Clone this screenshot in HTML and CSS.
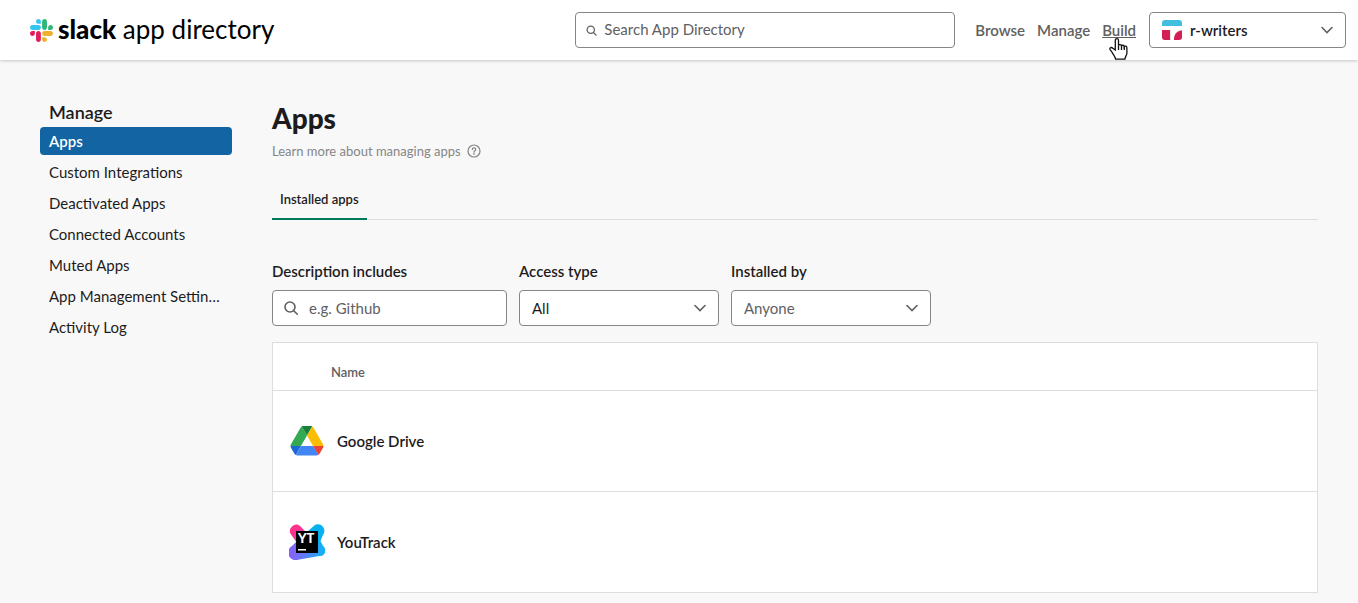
FILE: index.html
```html
<!DOCTYPE html>
<html lang="en">
<head>
<meta charset="utf-8">
<title>Manage apps | Slack App Directory</title>
<link rel="stylesheet" href="styles.css">
</head>
<body>
<header class="topbar">
  <a class="brand" href="#">
    <svg class="brand-mark" viewBox="0 0 122.8 122.8" aria-hidden="true">
      <path fill="#e01e5a" d="M25.8 77.6c0 7.1-5.8 12.9-12.9 12.9S0 84.7 0 77.6s5.8-12.9 12.9-12.9h12.9v12.9zM32.3 77.6c0-7.1 5.8-12.9 12.9-12.9s12.9 5.8 12.9 12.9v32.3c0 7.1-5.8 12.9-12.9 12.9s-12.9-5.8-12.9-12.9V77.6z"/>
      <path fill="#36c5f0" d="M45.2 25.8c-7.1 0-12.9-5.8-12.9-12.9S38.1 0 45.2 0s12.9 5.8 12.9 12.9v12.9H45.2zM45.2 32.3c7.1 0 12.9 5.8 12.9 12.9s-5.8 12.9-12.9 12.9H12.9C5.8 58.1 0 52.3 0 45.2s5.8-12.9 12.9-12.9h32.3z"/>
      <path fill="#2eb67d" d="M97 45.2c0-7.1 5.8-12.9 12.9-12.9s12.9 5.8 12.9 12.9-5.8 12.9-12.9 12.9H97V45.2zM90.5 45.2c0 7.1-5.8 12.9-12.9 12.9s-12.9-5.8-12.9-12.9V12.9C64.7 5.8 70.5 0 77.6 0s12.9 5.8 12.9 12.9v32.3z"/>
      <path fill="#ecb22e" d="M77.6 97c7.1 0 12.9 5.8 12.9 12.9s-5.8 12.9-12.9 12.9-12.9-5.8-12.9-12.9V97h12.9zM77.6 90.5c-7.1 0-12.9-5.8-12.9-12.9s5.8-12.9 12.9-12.9h32.3c7.1 0 12.9 5.8 12.9 12.9s-5.8 12.9-12.9 12.9H77.6z"/>
    </svg>
    <span class="brand-name"><strong>slack</strong> app directory</span>
  </a>
  <div class="topbar-tools">
    <form class="field site-search" role="search">
      <svg class="field-icon" viewBox="0 0 12 12" aria-hidden="true"><circle cx="5.2" cy="5.2" r="4"/><path d="M8.2 8.2 11 11"/></svg>
      <input class="field-input" type="search" aria-label="Search App Directory" placeholder="Search App Directory">
    </form>
    <nav class="topnav" aria-label="Site">
      <a href="#">Browse</a>
      <a href="#">Manage</a>
      <a class="is-hovered" href="#">Build
        <svg class="pointer" viewBox="0 0 19 24" aria-hidden="true"><path d="M6.3 13V3.2c0-2.2 3.2-2.2 3.2 0v5.4c.4-1.4 2.9-1.3 3 .4.5-1.2 2.7-1 2.8.7.6-1 2.6-.8 2.6 1.2v5c0 2.2-1.8 3.6-2 6.2H6.6c-.1-2.4-2.5-4.4-3.6-6.8-.6-1.2-1.6-2-2-2.9-.7-1.7 1.6-2.5 2.8-1.2z"/><path d="M9.5 8.6V13M12.5 9v4M15.3 9.8V13"/></svg>
      </a>
    </nav>
    <button class="team" type="button">
      <svg class="team-icon" viewBox="0 0 20 20" aria-hidden="true">
        <path fill="#e9e6e6" d="M0 5h20v12a3 3 0 0 1-3 3H3a3 3 0 0 1-3-3z"/>
        <path fill="#42bfe0" d="M0 6V3a3 3 0 0 1 3-3h14a3 3 0 0 1 3 3v3z"/>
        <path fill="#fff" d="M0 6h20v4c-6 .5-8 4-8 10H9V10H0z"/>
        <path fill="#d41e56" d="M0 10h8v10H3a3 3 0 0 1-3-3zM20 10.500v6.500a3 3 0 0 1-3 3h-5c0-5 2-9 8-9.500z"/>
      </svg>
      <span class="team-name">r-writers</span>
      <svg class="chevron" viewBox="0 0 12 8" aria-hidden="true"><path d="m1 1.500 5 5 5-5"/></svg>
    </button>
  </div>
</header>

<div class="layout">
  <nav class="sidebar" aria-labelledby="sidebar-title">
    <h2 class="sidebar-title" id="sidebar-title">Manage</h2>
    <ul class="sidebar-list">
      <li><a class="is-current" href="#" aria-current="page">Apps</a></li>
      <li><a href="#">Custom Integrations</a></li>
      <li><a href="#">Deactivated Apps</a></li>
      <li><a href="#">Connected Accounts</a></li>
      <li><a href="#">Muted Apps</a></li>
      <li><a href="#">App Management Settings</a></li>
      <li><a href="#">Activity Log</a></li>
    </ul>
  </nav>

  <main class="content">
    <h1 class="title">Apps</h1>
    <a class="help" href="#">Learn more about managing apps
      <svg class="help-icon" viewBox="0 0 14 14" aria-hidden="true"><circle cx="7" cy="7" r="6"/><path d="M5.300 5.600c0-2.200 3.400-2.200 3.400-.1 0 1.200-1.700 1.200-1.700 2.400M7 9.200v1.300"/></svg>
    </a>
    <div class="tabs" role="tablist">
      <button class="tab" type="button" role="tab" aria-selected="true">Installed apps</button>
    </div>

    <form class="filters">
      <div class="filter filter-wide">
        <label for="description">Description includes</label>
        <div class="field">
          <svg class="field-icon" viewBox="0 0 14 14" aria-hidden="true"><circle cx="6" cy="6" r="5"/><path d="m9.700 9.700 3.600 3.600"/></svg>
          <input class="field-input" id="description" type="text" placeholder="e.g. Github">
        </div>
      </div>
      <div class="filter">
        <label for="access">Access type</label>
        <div class="field">
          <select class="field-select" id="access"><option>All</option></select>
          <svg class="chevron" viewBox="0 0 12 8" aria-hidden="true"><path d="m1 1.500 5 5 5-5"/></svg>
        </div>
      </div>
      <div class="filter">
        <label for="installer">Installed by</label>
        <div class="field">
          <select class="field-select is-muted" id="installer"><option>Anyone</option></select>
          <svg class="chevron" viewBox="0 0 12 8" aria-hidden="true"><path d="m1 1.500 5 5 5-5"/></svg>
        </div>
      </div>
    </form>

    <table class="apps">
      <thead><tr><th scope="col">Name</th></tr></thead>
      <tbody>
        <tr><td><a class="app" href="#">
          <svg class="app-icon" viewBox="-4 -8 95.300 95.300" aria-hidden="true">
            <path fill="#1a67d6" d="m6.600 66.850 3.850 6.650c.8 1.400 1.950 2.500 3.300 3.300l13.750-23.800H0c0 1.550.4 3.100 1.200 4.500z"/>
            <path fill="#34a853" d="M43.650 25 29.900 1.200c-1.350.8-2.500 1.900-3.300 3.300l-25.400 44A9.060 9.060 0 0 0 0 53h27.500z"/>
            <path fill="#ea4335" d="M73.550 76.800c1.350-.8 2.500-1.900 3.300-3.300l1.600-2.750 7.650-13.250c.8-1.400 1.200-2.950 1.200-4.500H59.800l5.850 11.500z"/>
            <path fill="#188038" d="M43.650 25 57.400 1.200C56.050.4 54.500 0 52.900 0H34.400c-1.600 0-3.150.45-4.500 1.200z"/>
            <path fill="#4285f4" d="M59.800 53H27.500L13.750 76.800c1.350.8 2.900 1.200 4.500 1.200h50.800c1.600 0 3.150-.45 4.500-1.200z"/>
            <path fill="#fbbc04" d="m73.400 26.500-12.700-22c-.8-1.400-1.950-2.500-3.300-3.300L43.650 25 59.800 53h27.450c0-1.550-.4-3.100-1.200-4.500z"/>
          </svg>
          <span>Google Drive</span>
        </a></td></tr>
        <tr><td><a class="app" href="#">
          <svg class="app-icon" viewBox="0 0 36 36" aria-hidden="true">
            <defs>
              <linearGradient id="violet" x1="0" y1="0" x2="1" y2="0"><stop offset="0" stop-color="#905cfb"/><stop offset=".5" stop-color="#5681f7"/><stop offset="1" stop-color="#07b8f5"/></linearGradient>
              <linearGradient id="pink" x1="0" y1="0" x2="1" y2="1"><stop offset=".3" stop-color="#ff318c"/><stop offset="1" stop-color="#905cfb"/></linearGradient>
            </defs>
            <path fill="#07b1f0" d="M18 8 25 1.700a6.400 6.400 0 0 1 9 9L31.500 17l4 8a5 5 0 0 1-4 7L18 27z"/>
            <path fill="url(#violet)" d="M3 22 16 9l15 12a5.500 5.500 0 0 1 2 10.500L9 35.700A7.500 7.500 0 0 1 3 22z"/>
            <path fill="url(#pink)" d="M2 10.500A6.300 6.300 0 0 1 11 2l9 9-9 12z"/>
            <path d="M7 7h22v22H7z"/>
            <text class="glyph" x="9" y="19">YT</text>
            <path fill="#fff" d="M9 25h8v1.500H9z"/>
          </svg>
          <span>YouTrack</span>
        </a></td></tr>
      </tbody>
    </table>
  </main>
</div>
</body>
</html>
```
FILE: styles.css
```css
*, *::before, *::after { box-sizing: border-box; }

body {
  margin: 0;
  background: #f8f8f8;
  color: #1d1c1d;
  font: 15px/20px Lato, "Liberation Sans", sans-serif;
}

a { color: inherit; text-decoration: none; }
svg { display: block; flex: none; }

/* Header */
.topbar {
  display: flex;
  align-items: center;
  justify-content: space-between;
  height: 60px;
  padding: 0 12px 0 30px;
  background: #fff;
  box-shadow: 0 1px 3px rgba(0, 0, 0, .2);
}

.brand { display: flex; align-items: center; gap: 5px; color: #000; }
.brand-mark { width: 23px; height: 23px; }
.brand-name { padding-bottom: 2px; font-size: 26px; line-height: 32px; white-space: nowrap; }
.brand-name strong { font-weight: 900; }

.topbar-tools { display: flex; align-items: center; }
.site-search { width: 380px; margin-right: 20px; }

.field { position: relative; display: flex; align-items: center; }
.field-icon, .chevron, .help-icon {
  fill: none;
  stroke: #616061;
  stroke-width: 1.6;
  stroke-linecap: round;
}
.field-icon { position: absolute; left: 12px; width: 14px; height: 14px; }
.site-search .field-icon { left: 11px; width: 11px; height: 11px; stroke-width: 1.4; }
.field-input, .field-select {
  width: 100%;
  height: 36px;
  border: 1px solid #868686;
  border-radius: 4px;
  background: #fff;
  color: #1d1c1d;
  font: inherit;
  appearance: none;
}
.field-input { padding: 0 12px 0 36px; }
.site-search .field-input { padding: 0 12px 2px 28px; }
.field-input::placeholder { color: #616061; opacity: 1; }
.field-select { padding: 0 32px 0 12px; }
.field-select.is-muted { color: #616061; }
.chevron { width: 12px; height: 8px; }
.field .chevron { position: absolute; right: 13px; pointer-events: none; }

.topnav { display: flex; gap: 12px; margin-right: 13px; color: #616061; font-weight: 600; }
.topnav .is-hovered { position: relative; text-decoration: underline; }
.pointer {
  position: absolute;
  top: 17px;
  left: 7px;
  width: 19px;
  height: 24px;
  fill: #fff;
  stroke: #111;
  stroke-width: 1.3;
}

.team {
  display: flex;
  align-items: center;
  gap: 8px;
  width: 197px;
  height: 36px;
  padding: 0 12px;
  border: 1px solid #868686;
  border-radius: 4px;
  background: #fff;
  color: #1d1c1d;
  font: inherit;
  font-weight: 600;
}
.team-icon { width: 20px; height: 20px; }
.team-name { flex: 1; text-align: left; }

/* Page */
.layout { display: flex; gap: 40px; padding: 40px 40px 10px; }
.sidebar { flex: none; width: 192px; }
.sidebar-title { margin: 0; padding: 0 9px 3px; font-size: 18px; line-height: 24px; font-weight: 600; }
.sidebar-list { display: grid; gap: 3px; margin: 0; padding: 0; list-style: none; }
.sidebar-list a {
  display: block;
  padding: 4px 12px 4px 9px;
  overflow: hidden;
  border-radius: 4px;
  text-overflow: ellipsis;
  white-space: nowrap;
}
.sidebar-list li { min-width: 0; }
.sidebar-list .is-current { background: #1264a3; color: #fff; font-weight: 600; }

.content { flex: 1; min-width: 0; }
.title { margin: 0 0 5px; font-size: 28px; line-height: 36px; font-weight: 900; }
.help { display: flex; align-items: center; gap: 6px; color: #868686; font-size: 13px; line-height: 20px; }
.help-icon { width: 14px; height: 14px; stroke: #868686; stroke-width: 1.2; }

.tabs { display: flex; margin-top: 20px; border-bottom: 1px solid #ddd; }
.tab {
  height: 39px;
  margin-bottom: -1px;
  padding: 0 8px 2px;
  border: 0;
  border-bottom: 2px solid #007a5a;
  background: none;
  color: #1d1c1d;
  font: 600 13px/20px Lato, "Liberation Sans", sans-serif;
}

.filters { display: flex; gap: 12px; margin: 41px 0 16px; }
.filter { width: 200px; }
.filter-wide { width: 235px; }
.filter label { display: block; margin-bottom: 9px; font-weight: 600; }

.apps { width: 100%; border: 1px solid #ddd; border-spacing: 0; background: #fff; }
.apps th {
  height: 47px;
  padding: 11px 58px 0;
  color: #616061;
  font-size: 13px;
  font-weight: 600;
  text-align: left;
}
.apps td { height: 101px; padding: 0 16px; border-top: 1px solid #ddd; }
.app { display: flex; align-items: center; gap: 12px; font-weight: 600; }
.app-icon { width: 36px; height: 36px; }
.glyph { fill: #fff; font: 900 13px Lato, sans-serif; }
```
